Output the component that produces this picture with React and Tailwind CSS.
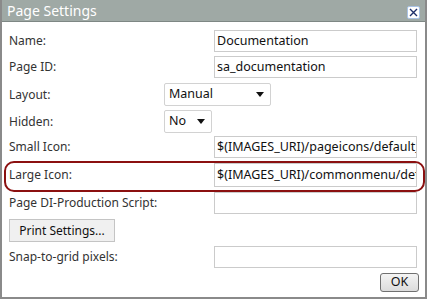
const font = { fontFamily: '"Noto Sans", "Open Sans", sans-serif' };

function Label({ children }) {
  return <div className="w-[155px] shrink-0 whitespace-nowrap text-[12px] text-[#333]">{children}</div>;
}

function TextBox({ value }) {
  return (
    <div className="ml-auto mr-[8px] h-[22px] w-[203px] border border-[#cbcbcb] bg-white pl-[2px] text-[12.5px] leading-[20px] text-[#111] overflow-hidden whitespace-nowrap">
      {value}
    </div>
  );
}

function Arrow() {
  return (
    <svg width="8" height="5" viewBox="0 0 8 5" className="shrink-0">
      <path d="M0 0h8L4 5z" fill="#111" />
    </svg>
  );
}

function Select({ value, width }) {
  return (
    <div
      className={`flex h-[23px] items-center justify-between rounded-[2px] border border-[#d2d2d2] bg-white pl-[4px] pr-[6px] text-[12.5px] text-[#111] ${width}`}
    >
      <span>{value}</span>
      <Arrow />
    </div>
  );
}

function Row({ label, children, className = '' }) {
  return (
    <div className={`flex items-center pl-[7px] ${className}`}>
      <Label>{label}</Label>
      {children}
    </div>
  );
}

export default function App() {
  return (
    <div style={font} className="w-[427px] h-[299px] flex flex-col border-2 border-t-0 border-[#8a8a8a] bg-white overflow-hidden">
      {/* Title bar */}
      <div className="h-[22px] -mx-[2px] shrink-0 flex items-center justify-between bg-[#9fa9a5] border-b border-[#7e8784] pl-[7px] pr-[7px]">
        <span className="text-[14px] text-white">Page Settings</span>
        <div className="w-[13px] h-[13px] mt-[4px] rounded-[2px] border border-[#a9c3e6] bg-white flex items-center justify-center">
          <svg width="9" height="9" viewBox="0 0 9 9">
            <path d="M1 1l7 7M8 1L1 8" stroke="#1e2f6a" strokeWidth="1.4" />
          </svg>
        </div>
      </div>

      <Row label="Name:" className="mt-[8px]">
        <TextBox value="Documentation" />
      </Row>
      <Row label="Page ID:" className="mt-[4px]">
        <TextBox value="sa_documentation" />
      </Row>
      <Row label="Layout:" className="mt-[5px]">
        <Select value="Manual" width="w-[107px]" />
      </Row>
      <Row label="Hidden:" className="mt-[4px]">
        <Select value="No" width="w-[48px]" />
      </Row>
      <Row label="Small Icon:" className="mt-[3px]">
        <TextBox value="$(IMAGES_URI)/pageicons/default_" />
      </Row>

      {/* highlighted row */}
      <div className="mt-[3px] ml-[2px] h-[31px] shrink-0 rounded-[10px] border-2 border-[#8b1010] flex items-start pl-[3px]">
        <div className="flex items-center h-[24px] w-full">
          <Label>Large Icon:</Label>
          <div className="ml-auto mr-[6px] h-[24px] w-[203px] border border-[#cbcbcb] bg-white pl-[2px] text-[12.5px] leading-[22px] text-[#111] overflow-hidden whitespace-nowrap">
            $(IMAGES_URI)/commonmenu/default
          </div>
        </div>
      </div>

      <Row label="Page DI-Production Script:" className="mt-0">
        <TextBox value="" />
      </Row>

      <div className="mt-[5px] pl-[7px]">
        <div className="w-[106px] h-[23px] border border-[#c4c4c4] bg-[#f0f0f0] text-[12px] text-[#111] flex items-center justify-center">
          Print Settings...
        </div>
      </div>

      <Row label="Snap-to-grid pixels:" className="mt-[4px]">
        <TextBox value="" />
      </Row>

      <div className="mt-[5px] flex justify-end pr-[6px]">
        <div className="w-[39px] h-[19px] rounded-[3px] border border-[#707070] bg-gradient-to-b from-[#f4f4f4] to-[#dcdcdc] text-[12.5px] text-[#111] flex items-center justify-center">
          OK
        </div>
      </div>
    </div>
  );
}
